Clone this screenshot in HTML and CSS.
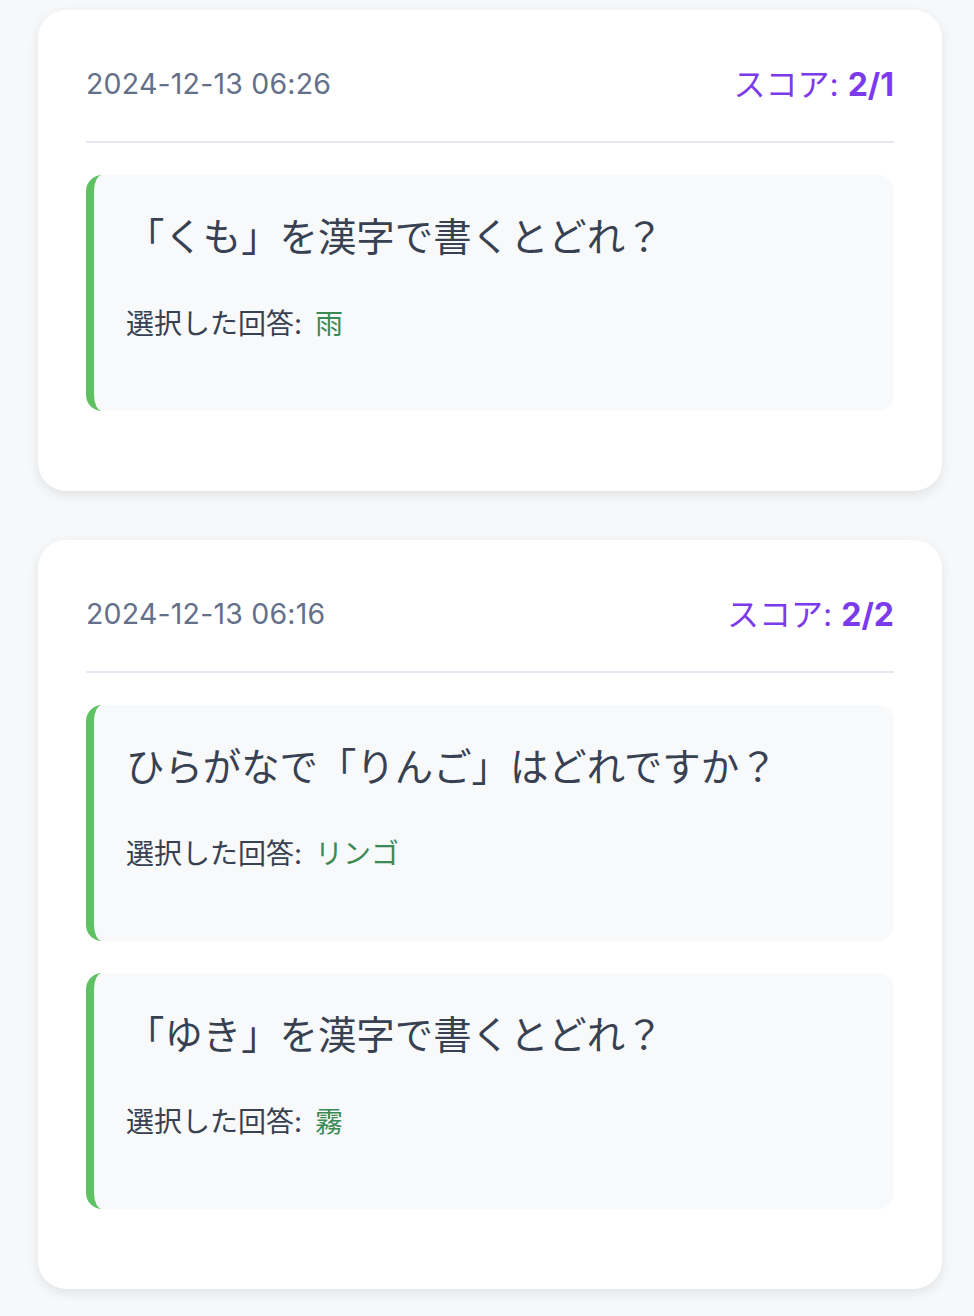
FILE: index.html
```html
<!DOCTYPE html>
<html lang="ja">
<head>
<meta charset="utf-8">
<title>履歴</title>
<link rel="stylesheet" href="styles.css">
</head>
<body>
<main class="history">
  <section class="card">
    <header class="card-header">
      <span class="date">2024-12-13 06:26</span>
      <span class="score">スコア: <strong>2/1</strong></span>
    </header>
    <div class="answer">
      <p class="question">「くも」を漢字で書くとどれ？</p>
      <p class="selected">選択した回答: <span class="choice">雨</span></p>
    </div>
  </section>
  <section class="card">
    <header class="card-header">
      <span class="date">2024-12-13 06:16</span>
      <span class="score">スコア: <strong>2/2</strong></span>
    </header>
    <div class="answer">
      <p class="question">ひらがなで「りんご」はどれですか？</p>
      <p class="selected">選択した回答: <span class="choice">リンゴ</span></p>
    </div>
    <div class="answer">
      <p class="question">「ゆき」を漢字で書くとどれ？</p>
      <p class="selected">選択した回答: <span class="choice">霧</span></p>
    </div>
  </section>
</main>
</body>
</html>
```

FILE: styles.css
```css
* { box-sizing: border-box; }

html, body {
  margin: 0;
  padding: 0;
  background: #f7f8fa;
}

body {
  font-family: Inter, "Noto Sans CJK JP", sans-serif;
  color: #374151;
}

.history {
  display: flex;
  flex-direction: column;
  gap: 49px;
  padding: 10px 32px 40px 38px;
}

.card {
  background: #ffffff;
  border-radius: 28px;
  padding: 48px 48px 48px;
  box-shadow: 0 4px 12px rgba(0, 0, 0, 0.09);
}

.card-header {
  display: flex;
  justify-content: space-between;
  align-items: center;
  height: 48px;
  box-sizing: content-box;
  padding-bottom: 35px;
  border-bottom: 2px solid #e5e8f1;
  margin-bottom: 32px;
}

.date {
  font-size: 28.5px;
  color: #64708a;
  letter-spacing: 0.2px;
  padding-top: 3px;
}

.score {
  font-size: 32px;
  color: #7c3aed;
  padding-bottom: 1px;
}

.score strong {
  font-weight: 700;
}

.answer {
  background: #f8f9fb;
  border-left: 8px solid #5ec262;
  border-radius: 16px;
  padding: 34px 32px 66px;
  margin-bottom: 32px;
}

.question {
  margin: 0 0 37px;
  font-size: 38.4px;
  line-height: 57px;
  color: #374151;
}

.selected {
  margin: 0;
  font-size: 28px;
  line-height: 42px;
  color: #374151;
}

.choice {
  color: #3b8a55;
  margin-left: 5px;
}
```
